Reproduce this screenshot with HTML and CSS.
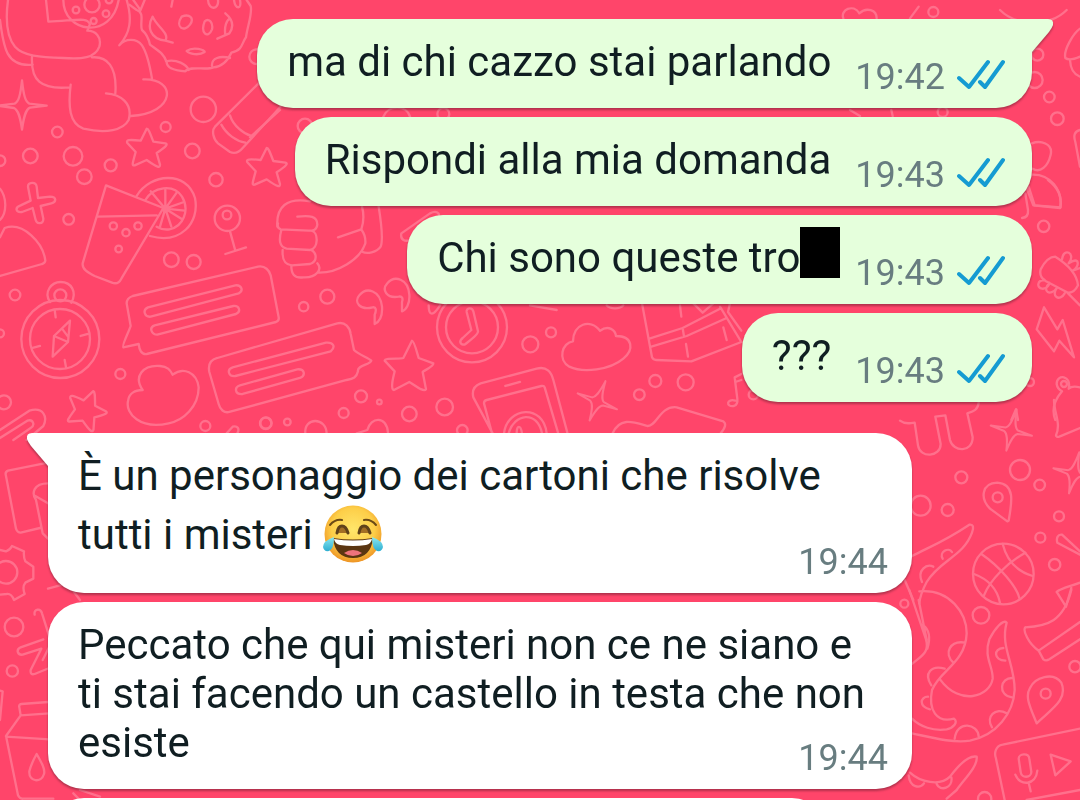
FILE: index.html
```html
<!DOCTYPE html>
<html lang="it">
<head>
<meta charset="utf-8">
<meta name="viewport" content="width=device-width, initial-scale=1">
<title>Chat</title>
<link rel="stylesheet" href="styles.css">
</head>
<body>
<svg class="wallpaper" viewBox="0 0 1080 800" preserveAspectRatio="xMidYMin slice" aria-hidden="true">
  <defs>
    <path id="star" d="M0-58C5-58 8-51 20-19L56-14C64-12 62-6 30 15L40 50C40 60 34 60 0 36L-36 52C-46 54-42 46-33 12L-58-15C-62-24-55-26-18-22Z"/>
    <path id="spark" d="M0-76C5-30 10-12 22-6L74 0L24 6C10 12 5 36 0 72C-5 36-10 14-24 7L-74 0L-22-6C-10-12-5-30 0-76Z"/>
  </defs>
  <g transform="scale(.33333)">
    <path d="M24 0C16 60 20 110 45 140C70 168 120 172 190 174C245 178 285 175 298 140C306 110 286 92 262 92L270 72C260 52 240 60 145 65L138 0M0 60C10 140 18 202 98 194M96 168C92 240 120 270 210 262M212 254C204 320 208 370 250 386C320 402 370 390 386 360C400 310 360 282 318 280M276 172C320 168 352 198 346 280M190 0C190 100 335 120 356 0M380 0C398 60 390 100 358 136C376 114 410 114 426 136C442 160 450 200 456 236M430 238C530 234 530 340 392 348"/>
    <circle cx="276" cy="14" r="23"/><circle cx="228" cy="30" r="10"/><circle cx="318" cy="41" r="10"/><circle cx="281" cy="63" r="9"/><circle cx="327" cy="0" r="10"/>
    <path d="M388 14L410 30C436 38 418 70 426 90C438 100 446 116 450 134C480 156 490 160 500 186C500 204 528 212 556 214C570 196 620 212 640 202C670 200 684 180 694 158C730 150 724 130 738 112C742 80 758 40 752 18L740 0M434 0L420 34M518 0L514 20M400 0L420 28M458 50C470 80 510 100 496 122C450 116 440 80 458 50M496 122L518 128M498 184C530 176 560 194 566 210M636 198C634 174 660 166 690 174"/>
    <path d="M545 50C568 40 584 54 570 74C552 98 524 82 545 50ZM614 64C628 52 640 70 636 88C624 118 600 100 614 64ZM676 40C700 60 702 80 688 100L652 116M676 104C672 80 680 60 690 56M560 153C580 138 616 150 614 156C596 168 568 162 560 153ZM624 0C626 34 658 28 654 0M702 0C706 28 726 30 720 0"/>
    <use href="#spark" x="66" y="317"/><use href="#star" x="440" y="444"/><use href="#star" x="800" y="502"/>
    <circle cx="172" cy="396" r="16"/><circle cx="91" cy="468" r="22"/><circle cx="219" cy="469" r="28"/><circle cx="253" cy="530" r="22"/><circle cx="332" cy="496" r="18"/><circle cx="497" cy="381" r="15"/><circle cx="610" cy="328" r="38"/><circle cx="577" cy="453" r="22"/><circle cx="648" cy="539" r="20"/><circle cx="770" cy="170" r="22"/><circle cx="0" cy="482" r="16"/>
    <path d="M790 236L645 380C634 392 640 418 654 430L690 456C704 462 718 456 728 444L860 300M664 374C680 404 710 424 736 428M690 346C700 378 732 402 754 408"/>
    <path d="M84 560C84 546 108 544 110 560L114 594L150 590C170 590 170 606 154 610L122 618L130 656C130 672 110 676 106 656L98 624L66 636C46 638 44 622 62 616L92 602ZM0 566C20 590 22 640 0 660"/>
    <path d="M318 556L248 790C246 808 264 818 284 828L336 848C352 854 360 844 364 836L490 624L318 556M294 650L470 646M410 588C450 520 560 510 585 594C600 670 540 734 450 708M436 600C460 560 520 550 546 590C570 630 550 680 508 688C492 690 480 686 470 680"/>
    <path d="M496 626V568M496 626L530 578M496 626L552 606M496 626L554 632M496 626L544 656M496 626L514 680M496 626L480 680M496 626L452 574"/><circle cx="496" cy="626" r="7"/>
    <circle cx="340" cy="678" r="11"/><circle cx="378" cy="698" r="11"/><circle cx="414" cy="678" r="11"/><circle cx="356" cy="747" r="10"/><circle cx="206" cy="658" r="16"/><circle cx="514" cy="779" r="22"/><circle cx="581" cy="786" r="21"/>
    <circle cx="682" cy="655" r="38"/><circle cx="681" cy="645" r="13"/><path d="M690 694L706 752M676 762L738 742"/>
    <path d="M0 712L14 684C70 664 130 730 136 782Q134 790 126 792L0 828"/>
  </g>
  <g transform="translate(0 200) scale(.33333)">
    <circle cx="181" cy="417" r="117"/><circle cx="180" cy="417" r="90"/><circle cx="181" cy="286" r="18"/><path d="M150 306C130 276 154 246 182 246C214 246 232 276 214 308M164 330L167 352M264 402L242 408M98 444L120 438M198 502L194 480M210 362L162 408L158 470L204 426ZM162 408L204 426M186 386L204 410"/>
    <circle cx="45" cy="285" r="16"/><circle cx="0" cy="400" r="12"/><circle cx="361" cy="522" r="15"/><circle cx="12" cy="607" r="21"/><circle cx="616" cy="678" r="15"/><circle cx="798" cy="669" r="17"/>
    <path d="M380 310C380 300 386 292 398 288L774 200C796 196 808 212 812 226L836 352Q838 362 828 366L440 462C424 464 418 450 416 432L370 442C364 438 388 392 392 378ZM444 322L706 256C724 254 732 272 716 280L452 350C434 352 426 330 444 322ZM464 376L700 318C718 316 724 334 708 342L472 404C454 404 446 382 464 376Z"/>
    <path d="M652 474L1012 370C1036 364 1050 384 1052 402L1062 450C1076 464 1102 472 1114 482C1112 494 1070 496 1074 514C1070 532 1060 536 1040 540L688 636C672 640 660 628 656 612L628 516C624 496 630 480 652 474ZM698 502L978 428C1000 426 1008 440 992 454L706 528C684 530 680 508 698 502ZM720 556L892 508C914 506 918 526 900 534L728 582C704 584 702 562 720 556Z"/>
    <path d="M428 570C400 530 428 494 480 498C502 500 510 508 518 524C550 500 590 516 596 562C596 620 550 662 506 670C420 690 376 640 384 604C386 580 406 570 428 570ZM0 690L88 632C130 620 144 650 130 678L80 720M0 714L82 662C100 656 106 676 92 684L40 720M680 700L698 680C712 676 720 686 712 700"/>
    <use href="#star" transform="translate(260 628) rotate(20)"/>
  </g>
  <g transform="translate(250 100) scale(.33333)">
    <path d="M82 380C78 320 110 292 180 304M142 350C180 346 202 348 202 374C200 390 190 392 176 392L92 388Q80 384 84 370M94 390C86 420 88 442 110 446L180 450C206 446 206 396 184 392M98 450C96 480 104 494 126 496L180 492C204 484 200 458 184 450M124 498C124 520 132 536 160 532C200 534 218 508 202 490M204 518C260 520 330 480 346 430C348 400 332 388 334 388L264 412M336 320C344 350 340 370 334 388M386 320C394 370 400 420 392 440C380 458 350 462 338 456M454 400L540 340C560 330 570 340 566 350M454 400C450 420 466 426 480 420"/>
    <circle cx="161" cy="620" r="14"/><circle cx="232" cy="590" r="21"/><circle cx="165" cy="78" r="22"/><circle cx="580" cy="42" r="18"/>
    <path d="M374 644C380 630 378 620 368 622C330 632 310 606 328 586C350 560 390 570 396 620C398 650 386 666 374 672ZM456 606C460 594 456 588 446 590C410 596 394 570 412 550C434 524 474 536 478 584C480 612 468 630 456 634ZM536 616C536 650 550 648 570 616M0 112L90 30M400 50C414 14 470 14 480 50"/>
  </g>
  <g transform="translate(250 290) scale(.33333)">
    <circle cx="666" cy="112" r="105"/><circle cx="666" cy="112" r="78"/><path d="M650 66C648 54 666 50 670 64L684 124C686 134 654 156 644 164C630 164 626 154 638 144L664 120Z"/>
    <path d="M486 152C492 152 500 184 506 204L550 220C552 230 520 242 518 246L528 298C520 308 490 282 478 276L432 300C420 298 430 260 434 244L404 212C404 202 450 208 460 204Z"/>
    <circle cx="333" cy="319" r="18"/><circle cx="388" cy="336" r="7"/><circle cx="281" cy="369" r="15"/><circle cx="478" cy="372" r="22"/><circle cx="584" cy="351" r="25"/><circle cx="47" cy="400" r="17"/><circle cx="112" cy="396" r="10"/><circle cx="637" cy="421" r="16"/>
    <path d="M166 432C160 380 230 380 230 432M320 430L352 420C362 380 410 376 414 428"/>
  </g>
  <g transform="translate(500 290) scale(.33333)">
    <circle cx="91" cy="163" r="24"/><circle cx="153" cy="127" r="15"/><circle cx="418" cy="314" r="16"/><circle cx="466" cy="273" r="18"/><circle cx="557" cy="277" r="24"/><circle cx="760" cy="314" r="14"/>
    <path d="M219 154C220 102 270 84 300 122C326 104 346 120 348 138C400 138 402 180 370 206C330 240 250 250 208 230C172 210 186 158 219 154Z"/>
    <path d="M-22 430L-80 322C-86 296-74 286-58 280L110 236C140 228 154 246 160 270L202 428M-24 430L-48 340Q-48 332-40 330L124 288Q132 286 134 292L174 428M16 288L60 276"/>
    <path d="M12 430C22 350 130 340 140 430M26 430C42 370 112 360 126 430M50 430C50 404 62 404 66 430"/>
    <use href="#spark" transform="translate(292 334) rotate(22) scale(.86)"/>
    <path d="M338 430C360 380 400 396 442 408C470 410 480 346 530 352L670 394Q684 404 662 430M426 40L456 202Q460 210 468 210L574 214L724 156L660 50M448 146L548 114L660 56M454 170L560 138L680 84M540 46L544 80M548 114L552 140M558 162L564 200M670 112L680 150M580 40L608 68L640 40M690 40L684 66L724 122M90 46L170 60M320 46C330 58 360 58 370 46M706 332C680 324 676 352 702 348Q714 344 712 326L704 262L724 252M706 276L724 270"/>
  </g>
  <g transform="translate(900 400) scale(.33333)">
    <path d="M0 62C18 76 30 68 44 68L54 136C60 176 122 172 122 132L106 50L136 46L150 120C160 158 218 158 218 112L202 40C220 34 234 30 236 8M462 0C462 40 484 70 468 106Q468 112 478 110L540 84"/>
    <use href="#spark" transform="translate(334 92) rotate(14) scale(.86)"/><use href="#spark" transform="translate(522 220) rotate(14) scale(.86)"/>
    <circle cx="184" cy="232" r="18"/><circle cx="360" cy="210" r="30"/><circle cx="419" cy="255" r="16"/><circle cx="62" cy="317" r="30"/><circle cx="143" cy="330" r="18"/><circle cx="477" cy="349" r="15"/><circle cx="421" cy="413" r="15"/><circle cx="464" cy="494" r="17"/>
    <path d="M322 364L270 326C240 296 244 250 292 248C346 252 336 306 326 362Z"/><circle cx="293" cy="292" r="15"/>
    <circle cx="310" cy="522" r="91"/><path d="M244 462C300 500 350 560 358 594M222 522C260 536 290 560 300 608M308 432C320 480 350 514 398 528M376 458C320 490 270 540 252 586"/>
    <path d="M540 454L486 404C474 402 468 414 472 428L540 464M470 576C484 564 510 560 540 548M470 576L498 620M514 564L498 620"/>
    <path d="M36 468C90 440 130 426 208 374C220 372 222 382 216 398C190 470 120 480 80 546C64 576 60 590 58 610M128 476C116 456 146 440 156 456M66 546C50 510 80 490 100 500M14 540L40 600"/>
  </g>
  <g transform="translate(900 590) scale(.33333)">
    <path d="M28 0L78 148C90 190 60 200 36 222M58 4C150-4 200 70 200 130C196 220 120 240 96 300C84 360 110 400 162 386C176 396 160 414 140 418C100 424 60 410 36 386M56 30L80 150M36 430C100 444 160 460 210 452C290 436 340 370 344 300C344 220 300 170 320 98C310 86 284 116 268 148C250 200 280 230 278 266C270 320 180 350 120 268M68 104C90 120 90 150 82 176M160 218C130 190 150 150 196 158M94 286C70 250 94 224 134 236M84 320C60 320 56 350 90 358M310 174C280 176 280 210 316 212M338 264C300 262 292 316 336 322M276 412C256 380 286 350 320 370M164 446C170 390 234 400 236 440"/>
    <circle cx="13" cy="41" r="12"/><circle cx="243" cy="76" r="25"/><circle cx="525" cy="230" r="17"/><circle cx="437" cy="311" r="15"/><circle cx="254" cy="626" r="20"/>
    <path d="M410 400C390 350 374 320 390 294C404 262 460 244 484 278C506 330 450 360 410 400ZM376 112C440 108 490 96 514 0M376 112C368 120 384 160 416 182L540 96M416 182L430 208Q438 214 448 208L540 148"/>
    <path d="M540 416L308 464C286 468 282 490 288 506L314 630M380 630L540 600M356 506C356 490 386 488 388 506L394 546C394 564 364 566 362 546ZM346 554C360 590 408 586 412 542M386 578L392 604M452 494L512 514L466 556Z"/>
    <path d="M30 548C60 576 120 590 150 560C180 520 210 496 230 500C234 530 190 570 170 600L140 626M26 556C30 594 60 596 72 580M110 582C120 606 160 594 154 562"/>
  </g>
  <g transform="translate(0 420) scale(.33333)">
    <path d="M144 128L24 152Q14 156 18 168L48 326Q52 338 62 338L120 324M144 190C100 190 94 220 108 240L128 340L144 356M106 228L144 250"/>
    <circle cx="18" cy="457" r="34"/><path d="M0 390L18 394Q30 390 36 378L72 394Q70 410 76 424L100 440V476L76 488Q66 500 74 522L42 540Q34 520 20 522L0 524M104 584C100 566 122 564 126 580L148 650M130 658L62 682C46 690 54 706 68 704L124 686L92 750Q90 766 104 762L148 744M128 720L148 680M0 812L8 814L0 900"/>
    <circle cx="42" cy="621" r="28"/><circle cx="37" cy="753" r="17"/>
    <path d="M144 846L64 852Q56 854 58 862L62 886L148 880M62 886L18 948L54 1126Q60 1138 70 1136H160M18 950L148 958M110 1002C126 1030 136 1048 132 1062C124 1090 86 1086 88 1054Q94 1030 110 1002ZM144 506L240 480M210 500L240 540M220 1120L240 1140M240 1110L300 1130"/>
  </g>
  <g transform="translate(840 10) scale(.33333)">
    <circle cx="592" cy="134" r="18"/><circle cx="584" cy="210" r="24"/><circle cx="628" cy="261" r="16"/><circle cx="652" cy="326" r="19"/><circle cx="308" cy="306" r="15"/><circle cx="280" cy="6" r="15"/><path d="M720 56C700 70 670 120 676 144Q688 154 720 140M690 150Q692 190 720 200M720 360Q696 366 706 396L720 470M576 400C600 390 640 400 632 434C624 470 600 490 578 476M572 494C630 490 670 540 660 594L580 586L558 530M30 300L60 318M154 300L158 318M480 0C530 50 630 50 680 0M10 25C0 0 40-20 58 10C80-10 110 0 110 25M210 25L236-10"/>
  </g>
  <g transform="translate(1000 180) scale(.33333)">
    <path d="M144 0C176 24 186 50 182 82L104 76L86 20M66 114Q86 112 84 90L76 40"/><circle cx="131" cy="139" r="17"/>
    <path d="M166 230Q142 230 122 268Q116 290 138 304L204 338Q222 340 234 316Q230 270 166 230ZM202 338L240 376M186 238C190 200 230 220 206 250M206 250C240 226 240 260 218 272M218 272L240 264M134 300C110 300 110 324 126 326C144 328 148 310 148 308M148 310C124 330 150 354 172 322M172 322C150 350 180 366 194 340"/>
    <path d="M132 382L110 448L162 514L178 482L222 532L188 420L172 448ZM240 622Q216 616 206 626C216 586 170 580 170 612Q172 626 186 634C164 660 154 690 166 720M34 720L48 688L54 720"/><circle cx="192" cy="612" r="9"/><circle cx="90" cy="606" r="12"/>
  </g>
</svg>

<svg class="symbols" aria-hidden="true">
  <symbol id="ticks" viewBox="0 0 48 32"><path d="M2 19L12 28L31 3M23 23L28 28L46 3"/></symbol>
  <symbol id="tail" viewBox="0 0 22 34"><path d="M0 0H16Q22 0 21 6Q20 9 17 13L0 33Z"/></symbol>
</svg>

<main class="chat">
  <article class="bubble out first">
    <svg class="tail" aria-hidden="true"><use href="#tail"/></svg>
    <p class="text">ma di chi cazzo stai parlando</p>
    <div class="meta"><time>19:42</time><svg class="ticks" role="img" aria-label="Letto"><use href="#ticks"/></svg></div>
  </article>
  <article class="bubble out">
    <p class="text">Rispondi alla mia domanda</p>
    <div class="meta"><time>19:43</time><svg class="ticks" role="img" aria-label="Letto"><use href="#ticks"/></svg></div>
  </article>
  <article class="bubble out">
    <p class="text">Chi sono queste tro<span class="redacted"></span></p>
    <div class="meta"><time>19:43</time><svg class="ticks" role="img" aria-label="Letto"><use href="#ticks"/></svg></div>
  </article>
  <article class="bubble out">
    <p class="text">???</p>
    <div class="meta"><time>19:43</time><svg class="ticks" role="img" aria-label="Letto"><use href="#ticks"/></svg></div>
  </article>
  <article class="bubble in first">
    <svg class="tail" aria-hidden="true"><use href="#tail"/></svg>
    <p class="text">È un personaggio dei cartoni che risolve tutti i misteri <svg class="emoji" viewBox="0 0 60 60" role="img" aria-label="Faccina che ride con lacrime">
      <defs>
        <radialGradient id="face" cx=".5" cy=".42" r=".58"><stop offset="0" stop-color="#ffe66b"/><stop offset=".65" stop-color="#fdce48"/><stop offset="1" stop-color="#ee9424"/></radialGradient>
        <linearGradient id="tear" x2="0" y2="1"><stop offset="0" stop-color="#8ce8ef"/><stop offset="1" stop-color="#2daed2"/></linearGradient>
      </defs>
      <circle cx="30" cy="29" r="28.500" fill="url(#face)"/>
      <path d="M7 20Q12 14 19 15M41 15Q48 14 53 20" fill="none" stroke="#6b4a16" stroke-width="2" stroke-linecap="round"/>
      <path d="M14 28Q15 21 19 21T25 28M36 28Q37 21 41 21T47 28" fill="#a36f25" stroke="#60421a" stroke-width="3" stroke-linecap="round"/>
      <path d="M10 33Q30 36 50 33Q48 53 30 53T10 33Z" fill="#5b3611"/>
      <path d="M11 34Q30 37 49 34Q48 39 43 40Q30 42 17 40Q12 39 11 34Z" fill="#fff"/>
      <path d="M21 48Q30 42 39 48Q35 51 30 51T21 48Z" fill="#ef737c"/>
      <path d="M11 32Q0 36 0 42Q1 47 6 46Q11 44 11 32ZM49 32Q60 36 60 42Q59 47 54 46Q49 44 49 32Z" fill="url(#tear)"/>
    </svg></p>
    <div class="meta"><time>19:44</time></div>
  </article>
  <article class="bubble in">
    <p class="text">Peccato che qui misteri non ce ne siano e ti stai facendo un castello in testa che non esiste</p>
    <div class="meta"><time>19:44</time></div>
  </article>
  <article class="bubble in next"></article>
</main>
</body>
</html>
```
FILE: styles.css
```css
* {
  box-sizing: border-box;
}

body {
  margin: 0;
  height: 100vh;
  overflow: hidden;
  background: #ff456a;
  color: #101e22;
  font-family: Roboto, "Liberation Sans", sans-serif;
}

.wallpaper {
  position: absolute;
  inset: 0;
  z-index: -1;
  width: 100%;
  height: 100%;
  fill: none;
  stroke: #ff708c;
  stroke-width: 7;
  stroke-linecap: round;
  stroke-linejoin: round;
}

.symbols {
  position: absolute;
  width: 0;
  height: 0;
}

.chat {
  display: flex;
  flex-direction: column;
  gap: 9px;
  padding: 19px 48px 0;
}

.bubble {
  position: relative;
  max-width: 864px;
  border-radius: 36px;
  filter: drop-shadow(0 2px 1px rgb(60 20 30 / 40%));
}

.out {
  display: flex;
  align-items: flex-end;
  align-self: flex-end;
  gap: 24px;
  padding: 18px 27px 22px 30px;
  background: #e5ffdc;
}

.in {
  display: grid;
  align-self: flex-start;
  padding: 18px 24px 22px 30px;
  background: #fff;
}

.in.first {
  margin-top: 22px;
}

.out.first {
  border-top-right-radius: 0;
}

.in.first {
  border-top-left-radius: 0;
}

.next {
  width: 780px;
  height: 89px;
}

.text {
  margin: 0;
  font-size: 42px;
  line-height: 49px;
}

.in .text {
  grid-area: 1 / 1;
  padding-right: 20px;
}

.meta {
  display: flex;
  align-items: center;
  gap: 12px;
  margin-bottom: -12px;
  color: #687d80;
  font-size: 36px;
  line-height: 42px;
}

.in .meta {
  grid-area: 1 / 1;
  place-self: end;
}

.ticks {
  width: 48px;
  height: 32px;
  margin-bottom: 4px;
  fill: none;
  stroke: #159bd2;
  stroke-width: 4;
  stroke-linecap: round;
  stroke-linejoin: round;
}

.tail {
  position: absolute;
  top: 0;
  width: 22px;
  height: 34px;
}

.out .tail {
  left: 100%;
  fill: #e5ffdc;
}

.in .tail {
  right: 100%;
  fill: #fff;
  transform: scaleX(-1);
}

.redacted {
  display: inline-block;
  width: 40px;
  height: 51px;
  margin: -10px -9px 0 0;
  vertical-align: -6px;
  background: #000;
}

.emoji {
  width: 60px;
  height: 60px;
  margin: 5px 0 6px;
  vertical-align: -22px;
}
```
